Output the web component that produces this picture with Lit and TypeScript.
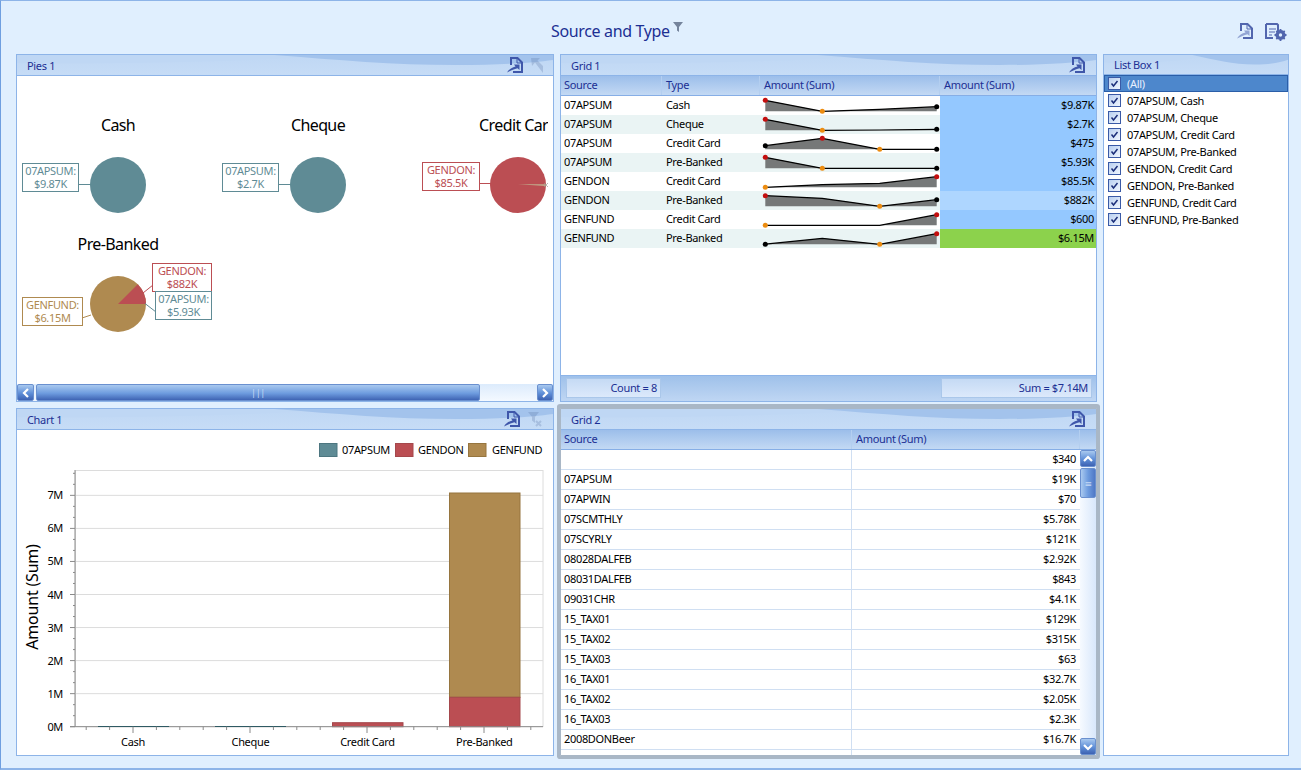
import { LitElement, html, css, svg } from "lit";
import { customElement } from "lit/decorators.js";

const TEAL = "#5f8b95", RED = "#bb4e53", TAN = "#af8a50";

const grid1 = [
  ["07APSUM", "Cash", "$9.87K", [4.3, 15.3, 13.3, 10.7], "#94c8ff"],
  ["07APSUM", "Cheque", "$2.7K", [4.3, 15.3, 15, 14.3], "#94c8ff"],
  ["07APSUM", "Credit Card", "$475", [11.7, 4.3, 15.3, 15.3], "#94c8ff"],
  ["07APSUM", "Pre-Banked", "$5.93K", [4.3, 15.3, 15.3, 15.3], "#94c8ff"],
  ["GENDON", "Credit Card", "$85.5K", [15.3, 12.7, 11.3, 4.7], "#94c8ff"],
  ["GENDON", "Pre-Banked", "$882K", [4.7, 7.3, 15.3, 8.7], "#aed6ff"],
  ["GENFUND", "Credit Card", "$600", [15.3, 15.3, 15.3, 4.7], "#94c8ff"],
  ["GENFUND", "Pre-Banked", "$6.15M", [15.2, 9.3, 15.3, 4.7], "#8cd24c"],
] as const;

const grid2 = [
  ["", "$340"], ["07APSUM", "$19K"], ["07APWIN", "$70"], ["07SCMTHLY", "$5.78K"], ["07SCYRLY", "$121K"],
  ["08028DALFEB", "$2.92K"], ["08031DALFEB", "$843"], ["09031CHR", "$4.1K"], ["15_TAX01", "$129K"],
  ["15_TAX02", "$315K"], ["15_TAX03", "$63"], ["16_TAX01", "$32.7K"], ["16_TAX02", "$2.05K"],
  ["16_TAX03", "$2.3K"], ["2008DONBeer", "$16.7K"], ["", "$56"],
];

const listItems = [
  "07APSUM, Cash", "07APSUM, Cheque", "07APSUM, Credit Card", "07APSUM, Pre-Banked",
  "GENDON, Credit Card", "GENDON, Pre-Banked", "GENFUND, Credit Card", "GENFUND, Pre-Banked",
];

const exportIcon = (cls: string, arrowOpacity: number) => html`<svg class=${cls} viewBox="0 0 17 16" width="17" height="16">
  <path d="M4 8V1h6.500L15 5.500V15H6" fill="none" stroke="currentColor" stroke-width="2"/>
  <path d="M10 1v5h4.500" fill="none" stroke="currentColor" stroke-width="1"/>
  <path d="M0 15.500C2 12 5 10.500 8.500 9.500L7 7.500H12.500V13L10.500 11.200C7 12 4 13.500 0 15.500Z" fill="currentColor" opacity=${arrowOpacity}/>
</svg>`;

const settingsIcon = html`<svg class="top-icon" viewBox="0 0 22 18" width="22" height="18">
  <path d="M1 1h11l1 1v6M8 15H1V1" fill="none" stroke="currentColor" stroke-width="2"/>
  <path d="M4 6h7M4 9h6M4 12h3" stroke="currentColor" stroke-width="1.200"/>
  <circle cx="15.500" cy="12" r="3.700" fill="none" stroke="currentColor" stroke-width="2.800"/>
  <path d="M15.500 6v12M9.500 12h12M11.300 7.800l8.400 8.400M19.700 7.800l-8.400 8.400" stroke="currentColor" stroke-width="1.800"/>
  <circle cx="15.500" cy="12" r="1.700" fill="#e0effe"/>
</svg>`;

const wave = html`<svg class="wave" viewBox="0 0 100 20" preserveAspectRatio="none">
  <path d="M0 0H60C45 6 25 9 0 8Z" fill="#bfd7f4"/>
  <path d="M48 0C60 5 70 10 82 10C90 10 96 8 100 5V0Z" fill="#a3c3ec"/>
</svg>`;

function pie(cx: number, cy: number, title: string, body: unknown) {
  return svg`<text class="pie-title" x=${cx} y=${cy - 54.500} text-anchor="middle">${title}</text>${body}`;
}

function callout(x: number, y: number, w: number, color: string, a: string, b: string) {
  const c = x + w / 2;
  return svg`<rect x=${x + 0.5} y=${y + 0.5} width=${w} height="28" fill="#fff" stroke=${color}/>
    <text class="call" x=${c + 0.5} y=${y + 12} fill=${color} text-anchor="middle">${a}</text>
    <text class="call" x=${c + 0.5} y=${y + 25} fill=${color} text-anchor="middle">${b}</text>`;
}

function sparkline(ys: readonly number[]) {
  const xs = [5.3, 62.3, 119.7, 176.7];
  const top = Math.min(...ys), low = Math.max(...ys);
  const hi = ys.indexOf(top), lo = ys.indexOf(low);
  const line = ys.map((y, i) => `${xs[i]},${y}`).join(" ");
  const area = `${xs[0]},15.300 ${line} ${xs[3]},15.300`;
  const marks = ys.map((y, i) => {
    const col = i === hi ? "#c40f0f" : i === lo ? "#ec8c10" : i === 0 || i === 3 ? "#000" : "";
    return col ? svg`<circle cx=${xs[i]} cy=${y} r="2.500" fill=${col}/>` : null;
  });
  return html`<svg class="spark" viewBox="0 0 180 19" width="180" height="19">
    <polygon points=${area} fill="#767878"/>
    <polyline points=${line} fill="none" stroke="#000" stroke-width="1.200"/>
    ${marks}</svg>`;
}

const chev = (d: string) => html`<svg viewBox="0 0 10 10" width="10" height="10"><path d=${d} fill="none" stroke="#fff" stroke-width="2.200"/></svg>`;

@customElement("app-root")
export class AppRoot extends LitElement {
  static styles = css`
    :host { display: block; width: 1301px; height: 770px; overflow: hidden;
      font-family: "Noto Sans", "DejaVu Sans", sans-serif; font-size: 11px; letter-spacing: -0.33px; color: #000; }
    * { box-sizing: border-box; }
    .page { height: 770px; background: #e0effe; border-top: 1px solid #8db4e8; border-left: 1px solid #6f9fe0;
      border-bottom: 2px solid #8db4e8; display: flex; flex-direction: column; }
    .topbar { height: 53px; display: flex; align-items: flex-start; padding: 20px 14px 0 550px; flex: none; }
    .title { font-size: 16px; letter-spacing: -0.35px; line-height: 20px; color: #1c2f93; }
    .funnel { margin: 1px 0 0 3px; color: #75849c; }
    .top-icons { margin-left: auto; display: flex; gap: 11px; color: #5266ae; padding-top: 2px; }
    .board { display: grid; padding-left: 15px; grid-template-columns: 538px 6px 537px 6px 186px;
      grid-template-rows: 348px 6px 348px; }
    .panel { border: 1px solid #8db4e8; background: #fff; display: flex; flex-direction: column; overflow: hidden; min-height: 0; }
    .pies { grid-column: 1; grid-row: 1; }
    .chart { grid-column: 1; grid-row: 3; }
    .g1 { grid-column: 3; grid-row: 1; }
    .g2 { grid-column: 3; grid-row: 3; border-color: #a9b7c6; box-shadow: 0 0 0 3px #a9b7c6, 0 -1px 0 3px #a9b7c6; border-radius: 1px; }
    .list { grid-column: 5; grid-row: 1 / 4; }
    .phead { position: relative; flex: none; height: 21px; display: flex; align-items: center; padding: 0 10px;
      background: linear-gradient(#bfd7f4, #c6dcf6); border-bottom: 1px solid #8db4e8; color: #1c2f93; }
    .wave { position: absolute; inset: 0; width: 100%; height: 100%; }
    .phead span, .phead .ico { position: relative; }
    .ptitle { flex: 1; }
    .ico { color: #3f57aa; margin-left: 7px; flex: none; }
    .ghost { opacity: .28; color: #5f79a8; }
    .list .phead { height: 20px; }

    .canvas { flex: 1; min-height: 0; padding-right: 5px; }
    .canvas svg { display: block; width: 531px; height: 100%; }
    .pie-title { font-size: 16px; letter-spacing: -0.6px; fill: #000; }
    .call { font-size: 11px; }
    .axis { font-size: 11px; fill: #000; }
    .ytitle { font-size: 16px; letter-spacing: -0.2px; fill: #000; }

    .hbar { flex: none; height: 17px; display: flex; background: linear-gradient(#dcebfc, #f4f9ff); }
    .sbtn { background: linear-gradient(#a9c9ef, #5f8fd8 55%, #3d62b2); border: 1px solid #6a90cf; border-radius: 2px;
      display: flex; align-items: center; justify-content: center; flex: none; }
    .hbar .sbtn { width: 17px; }
    .thumb { background: linear-gradient(#a9c9ef, #6e9cdf 55%, #3f64b4); border: 1px solid #6a90cf; border-radius: 2px; color: #c8daf4;
      display: flex; align-items: center; justify-content: center; flex: none; font-size: 9px; line-height: 1; }
    .hbar .thumb { width: 444px; margin-left: 2px; }
    .hbar .sbtn:last-child { margin-left: auto; width: 16px; }

    .cols { flex: none; height: 20px; display: grid; background: linear-gradient(#9cbeea, #c3d9f4);
      border-bottom: 1px solid #86aee6; color: #1c2f93; }
    .cols > div { padding: 0 4px; line-height: 18px; border-right: 1px solid #b4cff0; white-space: nowrap; overflow: hidden; }
    .g1 .cols, .g1 .row { grid-template-columns: 101px 98px 180px 1fr; }
    .g1 .cols > div:first-child { padding-left: 3px; }
    .g1 .cols > div:last-child, .g2 .cols > div:last-child { border-right: 0; }
    .g1 .body { flex: 1; min-height: 0; }
    .row { display: grid; height: 19px; line-height: 18px; }
    .row:nth-child(even) { background: #eaf4f4; }
    .row > div { padding: 0 4px; white-space: nowrap; }
    .row > div:first-child { padding-left: 3px; }
    .row > .sparkcell { padding: 0; }
    .spark { display: block; }
    .num { text-align: right; padding-right: 2px !important; }
    .foot { flex: none; height: 26px; border-top: 1px solid #8db4e8; background: linear-gradient(#9fc1ea, #bfd6f3);
      display: flex; justify-content: space-between; padding: 2px 4px 3px 5px; color: #1c2f93; }
    .fbox { height: 20px; line-height: 18px; border: 1px solid #aac7ea; background: linear-gradient(#c5daf4, #dce9fb); text-align: right; padding-right: 3px; }
    .fbox.a { width: 95px; }
    .fbox.b { width: 151px; }

    .g2 .cols { grid-template-columns: 291px 228px 1fr; }
    .g2 .cols > div:first-child { padding-left: 3px; }
    .g2 .main { flex: 1; min-height: 0; display: grid; grid-template-columns: 1fr 16px; overflow: hidden; }
    .g2 .rows { overflow: hidden; }
    .g2r { display: grid; grid-template-columns: 291px 1fr; height: 20px; line-height: 17px; border-bottom: 1px solid #d0dff2; }
    .g2r > div { padding: 0 3px; border-right: 1px solid #d0dff2; white-space: nowrap; }
    .g2r > div:last-child { border-right: 0; text-align: right; padding-right: 4px; }
    .vbar { background: linear-gradient(90deg, #f6faff, #d8e7fb); display: flex; flex-direction: column; }
    .vbar .sbtn { height: 17px; }
    .vbar .thumb { height: 30px; margin-top: 1px; background: linear-gradient(90deg, #a9c9ef, #6e9cdf 50%, #4f78c6); }
    .vbar .sbtn:last-child { margin-top: auto; }

    .opt { height: 17px; display: flex; align-items: center; gap: 6px; padding-left: 4px; white-space: nowrap; }
    .opt.all { background: #4d87cc; outline: 1px solid #2a5ea8; outline-offset: -1px; color: #e8f0ff; }
    .chk { width: 13px; height: 13px; border: 1px solid #3a5aa6; background: linear-gradient(135deg, #b8cff0, #f0f6fe); flex: none; display: block; }
  `;

  private head(title: string, icons: unknown = null) {
    return html`<div class="phead">${wave}<span class="ptitle">${title}</span>${icons}</div>`;
  }

  private pies() {
    const wedge = (cx: number, cy: number, a: number, fill: string) => {
      const r = 28, x = cx + r * Math.cos((a * Math.PI) / 180), y = cy - r * Math.sin((a * Math.PI) / 180);
      return svg`<path d="M${cx} ${cy}L${cx + r} ${cy}A${r} ${r} 0 0 0 ${x} ${y}Z" fill=${fill}/>`;
    };
    return svg`<svg viewBox="17 76 531 308">
      ${pie(118, 185, "Cash", svg`
        <line x1="78" y1="184.500" x2="91" y2="184.500" stroke=${TEAL}/>
        ${callout(22, 163, 56, TEAL, "07APSUM:", "$9.87K")}
        <circle cx="118" cy="185" r="28" fill=${TEAL}/>`)}
      ${pie(318, 185, "Cheque", svg`
        <line x1="278" y1="184.500" x2="291" y2="184.500" stroke=${TEAL}/>
        ${callout(222, 163, 56, TEAL, "07APSUM:", "$2.7K")}
        <circle cx="318" cy="185" r="28" fill=${TEAL}/>`)}
      ${pie(518, 185, "Credit Card", svg`
        <line x1="478" y1="183.500" x2="491" y2="183.500" stroke=${RED}/>
        ${callout(422, 162, 57, RED, "GENDON:", "$85.5K")}
        <circle cx="518" cy="185" r="28" fill=${RED}/>
        <path d="M518 184.300L546 184.300V186Z" fill="#c0ad8c"/>
        <path d="M544 183L548 187M548 183L544 187" stroke="#9a9a90" stroke-width=".7"/>`)}
      ${pie(118, 304, "Pre-Banked", svg`
        <circle cx="118" cy="304" r="28" fill=${TAN}/>
        ${wedge(118, 304, 45.200, RED)}
        <line x1="143" y1="293" x2="153" y2="285" stroke=${RED}/>
        <line x1="145" y1="303.500" x2="156" y2="312" stroke=${TEAL}/>
        <line x1="82" y1="318" x2="91" y2="315" stroke=${TAN}/>
        ${callout(152, 263, 59, RED, "GENDON:", "$882K")}
        ${callout(155, 291, 56, TEAL, "07APSUM:", "$5.93K")}
        ${callout(22, 297, 60, TAN, "GENFUND:", "$6.15M")}`)}
    </svg>`;
  }

  private chart() {
    const y0 = 726.7, step = 33.05;
    const grid = [1, 2, 3, 4, 5, 6, 7].map((n) => svg`<line x1="75" x2="543" y1=${y0 - n * step} y2=${y0 - n * step} stroke="#dcdcdc" stroke-width="1"/>`);
    const yticks: unknown[] = [];
    for (let i = 0; i <= 23; i++) {
      const y = y0 - (i * step) / 3, major = i % 3 === 0;
      yticks.push(svg`<line x1=${major ? 70 : 73} x2="75" y1=${y} y2=${y} stroke="#8a8a8a"/>`);
    }
    const xticks: unknown[] = [];
    for (let i = 0; i <= 19; i++) {
      const x = 86.2 + i * 23.4, major = (i - 2) % 5 === 0;
      xticks.push(svg`<line x1=${x} x2=${x} y1=${y0} y2=${major ? 733 : 730} stroke="#8a8a8a"/>`);
    }
    const bar = (x: number, top: number, bot: number, f: string, s: string) =>
      svg`<rect x=${x + 0.5} y=${top} width="70.500" height=${bot - top} fill=${f} stroke=${s}/>`;
    const swatch = (x: number, f: string, s: string, t: string, tx: number) =>
      svg`<rect x=${x + 0.5} y="443.500" width="17.500" height="13" fill=${f} stroke=${s}/><text class="axis" x=${tx} y="454">${t}</text>`;
    return svg`<svg viewBox="17 430 531 325">
      ${swatch(319, TEAL, "#4d7680", "07APSUM", 342)}
      ${swatch(395, RED, "#a5484c", "GENDON", 418)}
      ${swatch(468, TAN, "#96753f", "GENFUND", 492)}
      <rect x="75.500" y="470.500" width="467.500" height="256" fill="#fff" stroke="#dcdcdc"/>
      ${grid}
      ${bar(449, 493, 697.3, TAN, "#96753f")}
      ${bar(449, 697.3, y0, RED, "#a5484c")}
      ${bar(332, 722.7, y0, RED, "#a5484c")}
      <line x1="75" x2="75" y1="470" y2=${y0} stroke="#8a8a8a"/>
      <line x1="70" x2="543" y1=${y0} y2=${y0} stroke="#8a8a8a"/>
      <line x1="98" x2="169" y1="726.500" y2="726.500" stroke="#2f5a63"/>
      <line x1="215" x2="286" y1="726.500" y2="726.500" stroke="#2f5a63"/>
      ${yticks}${xticks}
      ${[0, 1, 2, 3, 4, 5, 6, 7].map((n) => svg`<text class="axis" x="63" y=${y0 - n * step + 4} text-anchor="end">${n}M</text>`)}
      ${[["Cash", 133], ["Cheque", 250.4], ["Credit Card", 367.5], ["Pre-Banked", 484.3]].map(
        ([t, x]) => svg`<text class="axis" x=${x} y="746" text-anchor="middle">${t}</text>`)}
      <text class="ytitle" transform="translate(38 597) rotate(-90)" text-anchor="middle">Amount (Sum)</text>
    </svg>`;
  }

  private check() {
    return html`<svg class="chk" viewBox="0 0 11 11"><path d="M2.500 5.500L4.500 8L8.500 3" fill="none" stroke="#1c2f7a" stroke-width="1.500"/></svg>`;
  }

  render() {
    const exp = exportIcon("ico", 1);
    const ghostUp = html`<svg class="ico ghost" viewBox="0 0 12 15" width="12" height="15"><path d="M0 0h9L6.500 2.500 12 8v7L4 4.500 1 8z" fill="currentColor"/></svg>`;
    const ghostClear = html`<svg class="ico ghost" viewBox="0 0 15 15" width="15" height="15"><path d="M0 0h11L7 5v6L4 8.500V5z" fill="currentColor"/><path d="M8 9l5 5M13 9l-5 5" stroke="currentColor" stroke-width="2"/></svg>`;
    return html`<div class="page">
      <div class="topbar">
        <span class="title">Source and Type</span>
        <svg class="funnel" viewBox="0 0 10 10" width="10" height="10"><path d="M0 0h10L6 5v5L4 8.500V5z" fill="currentColor"/></svg>
        <div class="top-icons">${exportIcon("top-icon", 0.55)}${settingsIcon}</div>
      </div>
      <div class="board">
        <section class="panel pies">
          ${this.head("Pies 1", html`${exp}${ghostUp}`)}
          <div class="canvas">${this.pies()}</div>
          <div class="hbar">
            <div class="sbtn">${chev("M7 1L3 5L7 9")}</div>
            <div class="thumb">|||</div>
            <div class="sbtn">${chev("M3 1L7 5L3 9")}</div>
          </div>
        </section>
        <section class="panel chart">
          ${this.head("Chart 1", html`${exp}${ghostClear}`)}
          <div class="canvas">${this.chart()}</div>
        </section>
        <section class="panel g1">
          ${this.head("Grid 1", exp)}
          <div class="cols"><div>Source</div><div>Type</div><div>Amount (Sum)</div><div>Amount (Sum)</div></div>
          <div class="body">
            ${grid1.map((r) => html`<div class="row">
              <div>${r[0]}</div><div>${r[1]}</div>
              <div class="sparkcell">${sparkline(r[3])}</div>
              <div class="num" style="background:${r[4]}">${r[2]}</div>
            </div>`)}
          </div>
          <div class="foot"><div class="fbox a">Count = 8</div><div class="fbox b">Sum = $7.14M</div></div>
        </section>
        <section class="panel g2">
          ${this.head("Grid 2", exp)}
          <div class="cols"><div>Source</div><div>Amount (Sum)</div><div></div></div>
          <div class="main">
            <div class="rows">
              ${grid2.map((r) => html`<div class="g2r"><div>${r[0]}</div><div>${r[1]}</div></div>`)}
            </div>
            <div class="vbar">
              <div class="sbtn">${chev("M1 7L5 3L9 7")}</div>
              <div class="thumb">≡</div>
              <div class="sbtn">${chev("M1 3L5 7L9 3")}</div>
            </div>
          </div>
        </section>
        <section class="panel list">
          ${this.head("List Box 1")}
          <div class="opt all">${this.check()}<span>(All)</span></div>
          ${listItems.map((t) => html`<div class="opt">${this.check()}<span>${t}</span></div>`)}
        </section>
      </div>
    </div>`;
  }
}
